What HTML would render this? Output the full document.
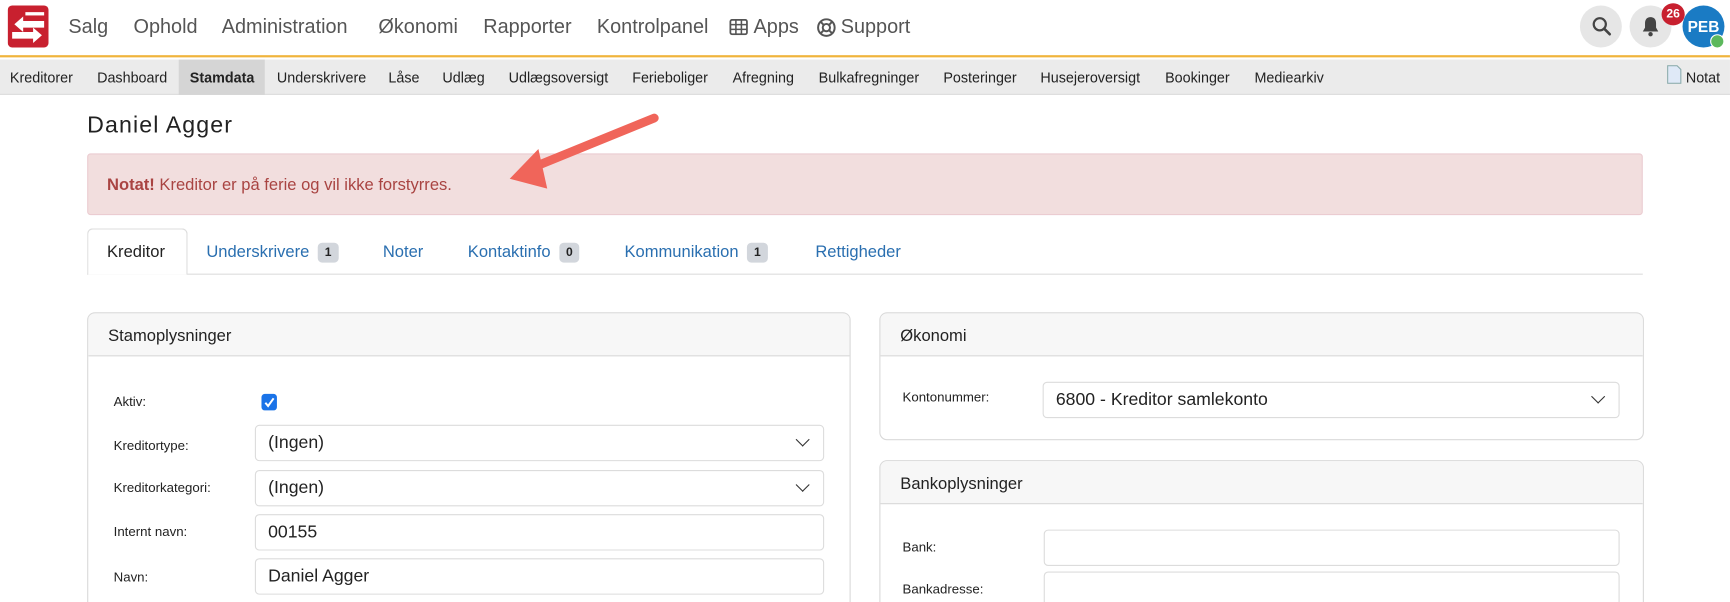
<!DOCTYPE html>
<html><head><meta charset="utf-8"><style>
*{box-sizing:border-box;margin:0;padding:0}
body{width:1730px;height:602px;overflow:hidden;background:#fff;font-family:"Liberation Sans",sans-serif;position:relative;color:#222}
#w{position:absolute;left:0;top:0;width:1568px;height:546px;transform:scale(1.1033);transform-origin:0 0;overflow:hidden}
.abs{position:absolute}
.top{position:absolute;left:0;top:0;width:1568px;height:52px;background:#fff;border-bottom:2px solid #f0b43c}
.nav{position:absolute;top:14px;font-size:18px;color:#555;white-space:nowrap}
.sub{position:absolute;left:0;top:54px;width:1568px;height:32px;background:#ebebeb;border-bottom:1px solid #ddd}
.sub span{position:absolute;top:9px;font-size:13px;color:#222}
.alert{left:79px;top:139px;width:1410px;height:56px;background:#f2dede;border:1px solid #ebccd1;border-radius:3px;color:#a94442;font-size:15px;padding:19px 17px}
.tab{position:absolute;top:220px;font-size:15px;color:#2a6fb0}
.badge{display:inline-block;background:#d2d6dc;color:#222;font-size:11px;font-weight:bold;border-radius:4px;padding:3px 6px;margin-left:8px;vertical-align:1px}
.panel{position:absolute;border:1px solid #d9d9d9;border-radius:7px;background:#fff;overflow:hidden}
.ph{height:39px;background:#f7f7f7;border-bottom:1px solid #d9d9d9;padding:12px 18px;font-size:15px;color:#222}
.lbl{position:absolute;font-size:12px;color:#222}
.inp{position:absolute;border:1px solid #dcdcdc;border-radius:4px;height:33px;font-size:16px;padding:7px 11px;color:#222}
.chev{position:absolute;right:14px;width:9px;height:9px;border-right:1.5px solid #333;border-bottom:1.5px solid #333;transform:rotate(45deg);top:8px}
</style></head><body><div id="w">
<div class="top">
 <svg class="abs" style="left:7px;top:5px" width="37" height="38" viewBox="0 0 37 38"><rect width="37" height="38" rx="4" fill="#c8202f"/><path d="M6 17 L14 10 V14 H33 V20 H14 V24 Z" fill="#fff"/><path d="M31 29 L23 22 V26 H4 V32 H23 V36 Z" fill="#fff" transform="translate(0,-2)"/><rect x="16" y="6" width="17" height="3" fill="#fff"/></svg>
 <span class="nav" style="left:62px">Salg</span>
 <span class="nav" style="left:121px">Ophold</span>
 <span class="nav" style="left:201px">Administration</span>
 <span class="nav" style="left:343px">Økonomi</span>
 <span class="nav" style="left:438px">Rapporter</span>
 <span class="nav" style="left:541px">Kontrolpanel</span>
 <svg class="abs" style="left:661px;top:17px" width="17" height="15" viewBox="0 0 17 15"><rect x="1" y="1" width="15" height="13" rx="1.5" fill="none" stroke="#555" stroke-width="1.6"/><path d="M1 5.3H16M1 9.6H16M6 1V14M11 1V14" stroke="#555" stroke-width="1.4"/></svg>
 <span class="nav" style="left:683px">Apps</span>
 <svg class="abs" style="left:740px;top:16px" width="18" height="18" viewBox="0 0 18 18"><circle cx="9" cy="9" r="7.5" fill="none" stroke="#555" stroke-width="1.8"/><circle cx="9" cy="9" r="3.3" fill="none" stroke="#555" stroke-width="1.8"/><path d="M3.7 3.7L6.6 6.6M14.3 3.7L11.4 6.6M3.7 14.3L6.6 11.4M14.3 14.3L11.4 11.4" stroke="#555" stroke-width="1.8"/></svg>
 <span class="nav" style="left:762px">Support</span>
 <div class="abs" style="left:1432px;top:5px;width:38px;height:38px;border-radius:50%;background:#e6e6e6"></div>
 <svg class="abs" style="left:1442px;top:14px" width="20" height="20" viewBox="0 0 20 20"><circle cx="8" cy="8" r="5.5" fill="none" stroke="#444" stroke-width="2"/><path d="M12 12L17 17" stroke="#444" stroke-width="2.4" stroke-linecap="round"/></svg>
 <div class="abs" style="left:1477px;top:5px;width:38px;height:38px;border-radius:50%;background:#e6e6e6"></div>
 <svg class="abs" style="left:1487px;top:14px" width="18" height="20" viewBox="0 0 18 20"><path d="M9 1.5C5.5 1.5 4 4 4 7V11L2 14.5H16L14 11V7C14 4 12.5 1.5 9 1.5Z" fill="#444"/><circle cx="9" cy="17" r="2" fill="#444"/></svg>
 <div class="abs" style="left:1525px;top:5px;width:38px;height:38px;border-radius:50%;background:#1a7bc4;color:#fff;font-weight:bold;font-size:14px;text-align:center;line-height:38px">PEB</div>
 <div class="abs" style="left:1550px;top:31px;width:13px;height:13px;border-radius:50%;background:#5cb85c;border:1px solid #fff"></div>
 <div class="abs" style="left:1506px;top:3px;width:21px;height:20px;border-radius:50%;background:#c8202f;color:#fff;font-weight:bold;font-size:11px;text-align:center;line-height:20px">26</div>
</div>
<div class="sub">
 <div class="abs" style="left:162px;top:0;width:78px;height:32px;background:#d5d5d5"></div>
 <span style="left:9px">Kreditorer</span>
 <span style="left:88px">Dashboard</span>
 <span style="left:172px;font-weight:bold">Stamdata</span>
 <span style="left:251px">Underskrivere</span>
 <span style="left:352px">Låse</span>
 <span style="left:401px">Udlæg</span>
 <span style="left:461px">Udlægsoversigt</span>
 <span style="left:573px">Ferieboliger</span>
 <span style="left:664px">Afregning</span>
 <span style="left:742px">Bulkafregninger</span>
 <span style="left:855px">Posteringer</span>
 <span style="left:943px">Husejeroversigt</span>
 <span style="left:1056px">Bookinger</span>
 <span style="left:1137px">Mediearkiv</span>
 <svg class="abs" style="left:1511px;top:5px" width="13" height="17" viewBox="0 0 13 17"><path d="M.5 .5H9L12.5 4V16.5H.5Z" fill="#dfe9f7" stroke="#8aa"/></svg>
 <span style="left:1528px">Notat</span>
</div>
<div class="abs" style="left:79px;top:102px;font-size:21px;letter-spacing:1px;color:#222">Daniel Agger</div>
<div class="abs alert"><b>Notat!</b> Kreditor er på ferie og vil ikke forstyrres.</div>
<svg class="abs" style="left:440px;top:95px" width="170" height="80" viewBox="0 0 170 80"><path d="M153 12L40 58" stroke="#f0655a" stroke-width="8" stroke-linecap="round"/><path d="M22 67L48 40L56 76Z" fill="#f0655a"/></svg>
<div class="abs" style="left:79px;top:248px;width:1410px;height:1px;background:#ddd"></div>
<div class="abs" style="left:79px;top:207px;width:91px;height:42px;border:1px solid #ddd;border-bottom:none;border-radius:5px 5px 0 0;background:#fff"></div>
<span class="tab" style="left:97px;color:#222">Kreditor</span>
<span class="tab" style="left:187px">Underskrivere<span class="badge">1</span></span>
<span class="tab" style="left:347px">Noter</span>
<span class="tab" style="left:424px">Kontaktinfo<span class="badge">0</span></span>
<span class="tab" style="left:566px">Kommunikation<span class="badge">1</span></span>
<span class="tab" style="left:739px">Rettigheder</span>

<div class="panel" style="left:79px;top:283px;width:692px;height:400px"><div class="ph">Stamoplysninger</div></div>
<span class="lbl" style="left:103px;top:357px">Aktiv:</span>
<div class="abs" style="left:237px;top:357px;width:14px;height:15px;border-radius:3px;background:#1a73e8"></div>
<svg class="abs" style="left:237px;top:357px" width="14" height="15"><path d="M3.5 8L6 11L11 4" fill="none" stroke="#fff" stroke-width="1.8"/></svg>
<span class="lbl" style="left:103px;top:397px">Kreditortype:</span>
<div class="inp" style="left:231px;top:385px;width:516px">(Ingen)<i class="chev"></i></div>
<span class="lbl" style="left:103px;top:435px">Kreditorkategori:</span>
<div class="inp" style="left:231px;top:426px;width:516px">(Ingen)<i class="chev"></i></div>
<span class="lbl" style="left:103px;top:475px">Internt navn:</span>
<div class="inp" style="left:231px;top:466px;width:516px">00155</div>
<span class="lbl" style="left:103px;top:516px">Navn:</span>
<div class="inp" style="left:231px;top:506px;width:516px">Daniel Agger</div>

<div class="panel" style="left:797px;top:283px;width:693px;height:116px"><div class="ph">Økonomi</div></div>
<span class="lbl" style="left:818px;top:353px">Kontonummer:</span>
<div class="inp" style="left:945px;top:346px;width:523px">6800 - Kreditor samlekonto<i class="chev"></i></div>
<div class="panel" style="left:797px;top:417px;width:693px;height:300px"><div class="ph">Bankoplysninger</div></div>
<span class="lbl" style="left:818px;top:489px">Bank:</span>
<div class="inp" style="left:946px;top:480px;width:522px"></div>
<span class="lbl" style="left:818px;top:527px">Bankadresse:</span>
<div class="inp" style="left:946px;top:518px;width:522px;height:40px"></div>
</div></body></html>
